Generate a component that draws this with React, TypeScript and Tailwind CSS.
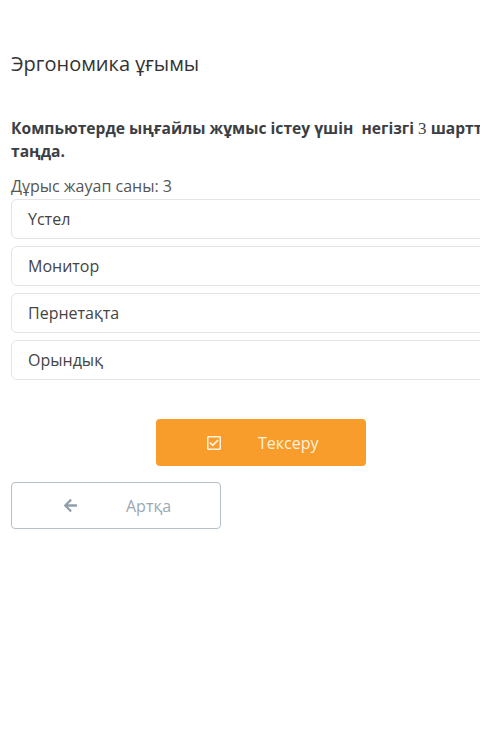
import React from "react";
import { FaRegCheckSquare, FaArrowLeft } from "react-icons/fa";

const items = ["Үстел", "Монитор", "Пернетақта", "Орындық"];

export default function App() {
  return (
    <div className="w-[480px] h-[754px] overflow-hidden bg-white" style={{ fontFamily: '"Open Sans", "Noto Sans", sans-serif' }}>
      <div className="w-[500px] ml-[11px]">
        <h1 className="pt-[50px] text-[20px] leading-[28px] text-[#333] font-normal">Эргономика ұғымы</h1>
        <p className="mt-[39px] text-[15.6px] leading-[23px] font-bold text-[#3b3f45]">
          Компьютерде ыңғайлы жұмыс істеу үшін&nbsp; негізгі{" "}
          <span className="font-normal text-[17px]" style={{ fontFamily: '"Liberation Serif", serif' }}>3</span> шартты таңда.
        </p>
        <div className="mt-[13px] text-[16px] leading-[20px] text-[#555]">Дұрыс жауап саны: 3</div>
        <div className="mt-[3px] flex flex-col gap-[7px]">
          {items.map((t) => (
            <div key={t} className="h-[40px] border border-[#e2e4e6] rounded-[6px] flex items-center pl-[16px] text-[16px] text-[#444]">
              {t}
            </div>
          ))}
        </div>
        <div className="mt-[39px] flex justify-center">
          <button className="w-[210px] h-[47px] rounded-[4px] bg-[#f89c2c] flex items-center text-[#fff3df] text-[16px]">
            <FaRegCheckSquare className="ml-[50px] w-[16px] h-[16px]" />
            <span className="ml-[36px]">Тексеру</span>
          </button>
        </div>
        <div className="mt-[16px]">
          <button className="w-[210px] h-[47px] rounded-[4px] border border-[#b5bfc6] bg-white flex items-center text-[#9aa8b2] text-[16px]">
            <FaArrowLeft className="ml-[51px] w-[15px] h-[15px] text-[#90a0ab]" />
            <span className="ml-[48px]">Артқа</span>
          </button>
        </div>
      </div>
    </div>
  );
}
